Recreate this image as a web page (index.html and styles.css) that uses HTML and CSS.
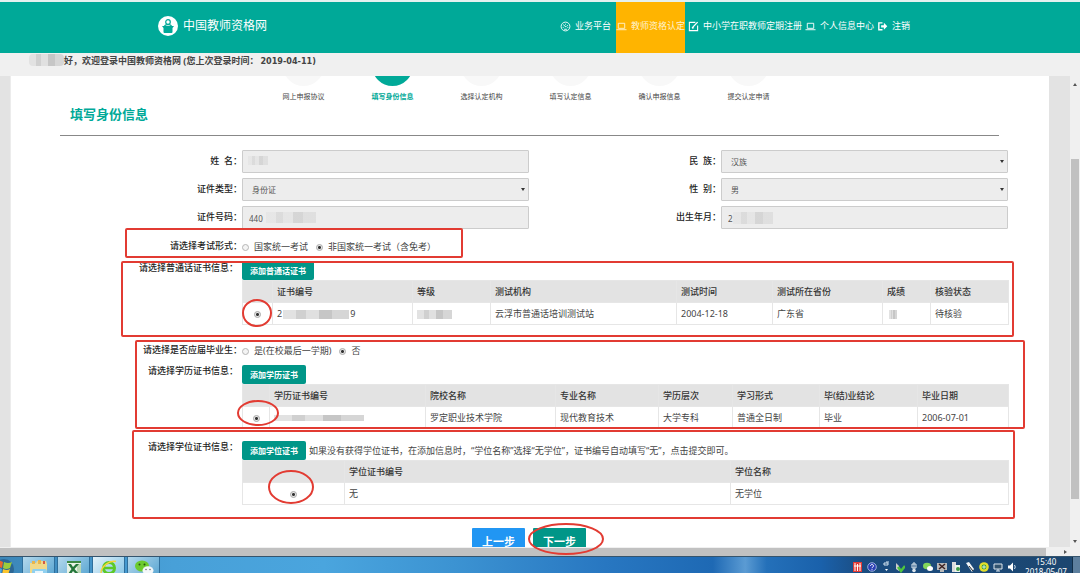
FILE: index.html
```html
<!DOCTYPE html>
<html lang="zh-CN">
<head>
<meta charset="utf-8">
<title>中国教师资格网</title>
<link rel="stylesheet" href="styles.css">
</head>
<body>
<header class="topbar">
  <div class="brand">
    <svg class="brand-logo" viewBox="0 0 20 20"><circle cx="10" cy="10" r="10" fill="#fff"/><circle cx="10" cy="6" r="2.3" fill="none" stroke="#00a998" stroke-width="1.2"/><path d="M6.500 10.500c.5-2.500 6.500-2.500 7 0" fill="none" stroke="#00a998" stroke-width="1.200"/><path d="M4 10h12l-1.500 2v4q0 1-1 1h-7q-1 0-1-1v-4z" fill="#00a998"/></svg>
    <span>中国教师资格网</span>
  </div>
  <nav class="nav">
    <a href="#"><svg viewBox="0 0 12 12"><circle cx="6" cy="6" r="4.800"/><path d="M3.500 4l3 2.500M6 3v1M8.500 4.500L7 6M3 7h1M8 7h1M4.500 9h3"/></svg>业务平台</a>
    <a href="#" class="active"><svg viewBox="0 0 12 12"><path d="M2.500 2.500h7v5.500h-7zM.5 9.500h11"/></svg>教师资格认定</a>
    <a href="#"><svg viewBox="0 0 12 12"><path d="M8 1.500H1.500v9h9V5" stroke-width="1.200"/><path d="M4.500 7.500L10.500 1.200M4.300 7.800l2-.6" stroke-width="1.500"/></svg>中小学在职教师定期注册</a>
    <a href="#"><svg viewBox="0 0 12 12"><path d="M2.500 2.500h7v5.500h-7zM.5 9.500h11"/></svg>个人信息中心</a>
    <a href="#"><svg viewBox="0 0 12 12"><path d="M6 2H2v7.500h4" stroke-width="1.500"/><path d="M4.500 4.500h3V2L11.200 5.800 7.500 9.500V7h-3z" fill="#fff" stroke="none"/></svg>注销</a>
  </nav>
</header>
<div class="greeting"><span class="mosaic mosaic-user"></span><span>好，欢迎登录中国教师资格网 (您上次登录时间：<span class="date">2019-04-11)</span></span></div>

<div class="workspace">
  <main class="page">
    <ol class="steps">
      <li>网上申报协议</li>
      <li class="current">填写身份信息</li>
      <li>选择认定机构</li>
      <li>填写认定信息</li>
      <li>确认申报信息</li>
      <li>提交认定申请</li>
    </ol>
    <h1 class="title">填写身份信息</h1>
    <form class="form">
      <div class="fields">
        <label for="name">姓&nbsp; 名：</label>
        <div class="field"><input id="name" type="text" readonly><span class="mosaic mosaic-name"></span></div>
        <label for="nation">民&nbsp; 族：</label>
        <div class="field drop"><select id="nation"><option>汉族</option></select></div>
        <label for="idtype">证件类型：</label>
        <div class="field drop"><select id="idtype"><option>身份证</option></select></div>
        <label for="sex">性&nbsp; 别：</label>
        <div class="field drop"><select id="sex"><option>男</option></select></div>
        <label for="idno">证件号码：</label>
        <div class="field"><input id="idno" type="text" value="440" readonly><span class="mosaic mosaic-id"></span></div>
        <label for="birth">出生年月：</label>
        <div class="field"><input id="birth" type="text" value="2" readonly><span class="mosaic mosaic-birth"></span></div>
      </div>

      <div class="row exam">
        <span class="row-label">请选择考试形式：</span>
        <div class="choices">
          <label><input type="radio" name="exam">国家统一考试</label>
          <label><input type="radio" name="exam" checked>非国家统一考试（含免考）</label>
        </div>
      </div>

      <div class="row cert mandarin">
        <span class="row-label">请选择普通话证书信息：</span>
        <div class="cert-body">
          <div class="cert-bar"><button type="button" class="add">添加普通话证书</button></div>
          <table>
            <colgroup><col class="w30"><col class="w140"><col class="w78"><col class="w186"><col class="w96"><col class="w110"><col class="w48"><col class="w78"></colgroup>
            <thead><tr><th></th><th>证书编号</th><th>等级</th><th>测试机构</th><th>测试时间</th><th>测试所在省份</th><th>成绩</th><th>核验状态</th></tr></thead>
            <tbody><tr><td class="pick"><input type="radio" name="m" aria-label="普通话证书" checked></td><td><span class="masked">2<span class="mosaic mosaic-no"></span>9</span></td><td><span class="mosaic mosaic-level"></span></td><td>云浮市普通话培训测试站</td><td>2004-12-18</td><td>广东省</td><td><span class="mosaic mosaic-score"></span></td><td>待核验</td></tr></tbody>
          </table>
        </div>
      </div>

      <div class="row grad">
        <span class="row-label">请选择是否应届毕业生：</span>
        <div class="choices">
          <label><input type="radio" name="grad">是(在校最后一学期)</label>
          <label><input type="radio" name="grad" checked>否</label>
        </div>
      </div>

      <div class="row cert edu">
        <span class="row-label">请选择学历证书信息：</span>
        <div class="cert-body">
          <div class="cert-bar"><button type="button" class="add">添加学历证书</button></div>
          <table>
            <colgroup><col class="w27"><col class="w156"><col class="w130"><col class="w103"><col class="w74"><col class="w87"><col class="w98"><col class="w91"></colgroup>
            <thead><tr><th></th><th>学历证书编号</th><th>院校名称</th><th>专业名称</th><th>学历层次</th><th>学习形式</th><th>毕(结)业结论</th><th>毕业日期</th></tr></thead>
            <tbody><tr><td class="pick"><input type="radio" name="e" aria-label="学历证书" checked></td><td><span class="mosaic mosaic-edu"></span></td><td>罗定职业技术学院</td><td>现代教育技术</td><td>大学专科</td><td>普通全日制</td><td>毕业</td><td>2006-07-01</td></tr></tbody>
          </table>
        </div>
      </div>

      <div class="row cert degree">
        <span class="row-label">请选择学位证书信息：</span>
        <div class="cert-body">
          <div class="cert-bar"><button type="button" class="add">添加学位证书</button><span>如果没有获得学位证书，在添加信息时，“学位名称”选择“无学位”，证书编号自动填写“无”，点击提交即可。</span></div>
          <table>
            <colgroup><col class="w102"><col class="w386"><col class="w278"></colgroup>
            <thead><tr><th></th><th>学位证书编号</th><th>学位名称</th></tr></thead>
            <tbody><tr><td class="pick"><input type="radio" name="d" aria-label="学位证书" checked></td><td>无</td><td>无学位</td></tr></tbody>
          </table>
        </div>
      </div>

      <div class="actions"><button type="button" class="prev">上一步</button><button type="button" class="next">下一步</button></div>
    </form>
  </main>
  <div class="vscroll"><i class="arrow up"></i><span class="vthumb"></span><i class="arrow down"></i></div>
</div>
<div class="hscroll"><span class="hthumb"></span><i class="arrow right"></i></div>

<footer class="taskbar">
  <div class="apps">
    <svg class="start" viewBox="0 0 20 17"><circle cx="4" cy="12" r="10" fill="#2c6795"/><path d="M-6 5q4-3 9 0l-1 6q-5-2-9 0z" fill="#e9682c"/><path d="M4 5q4 2 8 0l-2 6q-4 2-7 0z" fill="#9ccc3c"/><path d="M-6 12q4-2 8 0l-1 6h-8z" fill="#49a7e8"/><path d="M3 12q4 2 7 0l-2 6H2z" fill="#fbc52e"/></svg>
    <span class="app"><svg viewBox="0 0 20 15"><path d="M1 3h6l1-2h9l1 3v11H1z" fill="#f1d98a"/><path d="M3 1h3v3H3zM9 0h3v4H9z" fill="#e8b54c"/><path d="M14 1h2v3h-2z" fill="#d55a47"/><path d="M4 9h12q2 0 2 3v3H3v-3q0-3 1-3z" fill="#8fd0f0"/><path d="M6 11h8v4H6z" fill="#e8f6fd"/></svg></span>
    <span class="app"><svg viewBox="0 0 20 15"><path d="M3 1h14v14H3z" fill="#e9f3e6"/><path d="M3 1h14v2H3z" fill="#3d8a45"/><path d="M13 4h4v11h-4z" fill="#b9d8b4"/><path d="M4 4l3 0 2 3 3-3h3l-4.500 5 4.500 5h-3l-3-3-2 3H4l3.500-5z" fill="#24763a"/></svg></span>
    <span class="app lit"><svg viewBox="0 0 20 15"><circle cx="10" cy="8" r="5.500" fill="none" stroke="#5cc928" stroke-width="3"/><path d="M6 8h9" stroke="#5cc928" stroke-width="2.500"/><path d="M2 13C2 7 10 0 17 1.500" fill="none" stroke="#f4d53a" stroke-width="1.500"/></svg></span>
    <span class="app"><svg viewBox="0 0 20 15"><ellipse cx="8" cy="6" rx="7" ry="5.500" fill="#6ccb2f"/><circle cx="5.500" cy="4.500" r="1" fill="#28540f"/><circle cx="10.500" cy="4.500" r="1" fill="#28540f"/><ellipse cx="14" cy="10.500" rx="5.500" ry="4.300" fill="#f4f8fa"/><circle cx="12" cy="9.500" r=".8" fill="#777"/><circle cx="16" cy="9.500" r=".8" fill="#777"/></svg></span>
  </div>
  <div class="tray">
    <svg viewBox="0 0 10 12"><path d="M0 1h9v10H0z" fill="#e23a35"/><path d="M2 2v8M4.500 3v7M7 2v8M1 5h7" stroke="#fff" fill="none"/></svg>
    <svg viewBox="0 0 10 12"><circle cx="5" cy="6" r="4.300" fill="#2b3fb4" stroke="#b8c8ee" stroke-width=".8"/><path d="M3.500 5c0-2 3-2 3 0 0 1-1.500 1-1.500 2.200M5 8.200v1" fill="none" stroke="#fff"/></svg>
    <svg viewBox="0 0 10 12"><path d="M3 2h4v2H3zM5 1h3" fill="none" stroke="#d5e4f0"/><path d="M4 8h3l-1.500 2z" fill="#fff"/></svg>
    <svg viewBox="0 0 10 12"><path d="M1 2l3 3v5L1 8z" fill="#ccc"/><path d="M3 6l3 4 4-5" stroke="#4fc53d" stroke-width="2.500" fill="none"/></svg>
    <svg viewBox="0 0 10 12"><path d="M5 1v8M3 3h4v4H3z" stroke="#dbe5ec" fill="none"/><circle cx="5" cy="9.500" r="1.800" fill="#dbe5ec"/></svg>
    <svg viewBox="0 0 10 12"><ellipse cx="4" cy="5" rx="4" ry="3.300" fill="#83d65a"/><ellipse cx="7" cy="7.500" rx="3" ry="2.500" fill="#fff"/></svg>
    <svg viewBox="0 0 10 12"><path d="M0 2h10v7H0zM3 9h4v2H3z" fill="#b9b9b9"/><path d="M2 3l6 5M8 3L2 8" stroke="#3b2020" stroke-width="1.500"/></svg>
    <svg viewBox="0 0 10 12"><path d="M1 1h4v10H1z" fill="#ddd"/><path d="M4 4h5v7H4z" fill="#eef5ee"/><circle cx="7" cy="8" r="2" fill="#3b9c44"/></svg>
    <svg viewBox="0 0 10 12"><path d="M1 2l3-1 5 7-2 3-4-6z" fill="#f3f6f8"/><path d="M4 5l4 5" stroke="#222"/></svg>
    <svg viewBox="0 0 10 12"><circle cx="5" cy="6" r="4.800" fill="#e4df2b"/><circle cx="5" cy="6" r="2.400" fill="#2f9c3a"/><path d="M3 6h4M5 4v4" stroke="#fff" stroke-width=".8"/></svg>
    <svg viewBox="0 0 10 12"><path d="M1 3h8v5H1zM3 10h4M5 8v2" fill="#32536f" stroke="#dce6ee"/></svg>
    <svg viewBox="0 0 10 12"><path d="M1 4.500h2l3-3v9l-3-3H1z" fill="#fff"/><path d="M7.500 4q1.500 2 0 4" fill="none" stroke="#cfe0ee"/></svg>
  </div>
  <div class="clock"><span>15:40</span><span>2018-05-07</span></div>
  <span class="show-desktop"></span>
</footer>

<svg class="marks" width="1080" height="573" viewBox="0 0 1080 573">
  <rect x="126" y="229" width="336" height="28" rx="1"/>
  <rect x="122" y="262" width="891" height="74" rx="1"/>
  <rect x="136" y="341" width="888" height="87" rx="1"/>
  <rect x="133" y="431" width="881" height="87" rx="1"/>
  <ellipse cx="257" cy="313" rx="14" ry="13"/>
  <ellipse cx="258" cy="413" rx="20" ry="12"/>
  <ellipse cx="291" cy="487" rx="22" ry="16"/>
  <ellipse cx="566" cy="539" rx="37" ry="15"/>
</svg>
</body>
</html>
```

FILE: styles.css
```css
* { box-sizing: border-box; }
body {
  margin: 0;
  height: 100vh;
  overflow: hidden;
  position: relative;
  display: flex;
  flex-direction: column;
  font: 9px/14px "Noto Sans", "Noto Sans CJK SC", sans-serif;
  color: #444;
  background: #f1f1f1;
}
button, input, select { font: inherit; margin: 0; }

.topbar {
  flex: none;
  height: 53px;
  border-top: 2px solid #e4f1ef;
  background: #00a998;
  color: #fff;
  display: flex;
  justify-content: space-between;
  padding: 0 170px 3px 158px;
}
.brand { display: flex; align-items: center; gap: 5px; font-size: 12px; }
.brand-logo { width: 20px; height: 20px; }
.nav { display: flex; margin-bottom: -3px; }
.nav a {
  display: flex;
  align-items: center;
  gap: 4px;
  padding: 0 0 3px 3px;
  color: #fff;
  text-decoration: none;
}
.nav a.active { background: #ffb400; padding-left: 0; margin-left: 5px; color: #fff3cf; }
.nav svg { width: 11px; height: 11px; fill: none; stroke: currentColor; }

.greeting {
  flex: none;
  height: 23px;
  padding: 1px 0 0 29px;
  display: flex;
  align-items: flex-start;
  font-weight: bold;
  background: #f0f0f0;
}
.date { font-family: "DejaVu Sans Condensed", "DejaVu Sans", sans-serif; margin-left: 2px; }
.mosaic {
  display: inline-block;
  height: 9px;
  vertical-align: middle;
  background: linear-gradient(90deg, #e2e2e2 0 20%, #d0d0d0 20% 35%, #e0e0e0 35% 55%, #c6c6c6 55% 75%, #d6d6d6 75%);
}
.mosaic-user { width: 35px; height: 12px; border-radius: 4px; }
.mosaic-no { width: 66px; margin: 0 1px; }
.mosaic-level { width: 35px; }
.mosaic-score { width: 8px; margin-left: 2px; }
.mosaic-edu { width: 90px; height: 6px; }

.workspace { flex: 1; min-height: 0; display: flex; background: #e3e3e3; overflow: hidden; }
.page { flex: 1; margin: 0 21px 0 10px; background: #fff; border-left: 1px solid #ececec; overflow: hidden; }
.steps {
  list-style: none;
  margin: -31px 0 0;
  padding: 0 8px 0 0;
  display: flex;
  justify-content: center;
  font-size: 7px;
  line-height: 12px;
}
.steps li { width: 89px; text-align: center; }
.steps li::before {
  content: "";
  display: block;
  width: 41px;
  height: 41px;
  margin: 0 auto 5px;
  border-radius: 50%;
  background: #f8f8f8;
}
.steps .current { color: #00a998; font-weight: bold; }
.steps .current::before { background: #00a998; }
.title {
  margin: 2px 50px 0 49px;
  padding: 0 0 12px 10px;
  border-bottom: 1px solid #888;
  font-size: 13px;
  line-height: 18px;
  color: #00a998;
}
.form { padding: 14px 41px 0 49px; }
.fields {
  display: grid;
  grid-template-columns: 182px 1fr 192px 1fr;
  row-gap: 5px;
  align-items: center;
}
.fields > label, .row-label { text-align: right; font-weight: 500; color: #222; }
.fields > label { padding-bottom: 2px; }
.field { position: relative; }
.field input, .field select {
  display: block;
  width: 100%;
  height: 23px;
  padding: 1px 6px 0;
  border: 1px solid #ccc;
  border-radius: 1px;
  background: #ededed;
  color: #555;
  font-size: 8px;
  appearance: none;
}
.field select { padding-left: 9px; }
.drop::after {
  content: "";
  position: absolute;
  right: 4px;
  top: 10px;
  border: 2px solid transparent;
  border-top: 3px solid #333;
  border-bottom: 0;
}
.field .mosaic { position: absolute; top: 6px; opacity: .6; }
.mosaic-name { left: 6px; width: 20px; }
.field .mosaic-id { left: 24px; width: 50px; height: 11px; }
.field .mosaic-birth { left: 12px; width: 40px; height: 12px; }

.row { display: grid; grid-template-columns: 182px 1fr; }
.exam { padding-top: 10px; }
.choices { display: flex; gap: 8px; padding-top: 1px; }
.choices label { display: flex; align-items: center; gap: 5px; }
input[type="radio"] {
  appearance: none;
  width: 7px;
  height: 7px;
  border: 1px solid #b5b5b5;
  border-radius: 50%;
  background: #f4f4f4;
}
input[type="radio"]:checked { background: radial-gradient(circle, #333 0 1px, #e6e6e6 2px); border-color: #aaa; }
.cert .row-label { padding-right: 4px; }
.mandarin { padding-top: 7px; }
.grad { padding-top: 18px; }
.edu { padding-top: 7px; }
.edu .row-label, .degree .row-label { margin-top: -1px; }
.degree { padding-top: 12px; }
.cert-bar { display: flex; align-items: center; gap: 3px; }
.add {
  height: 19px;
  padding: 0 8px;
  border: 0;
  border-radius: 2px;
  background: #009688;
  color: #fff;
  font-size: 8px;
  font-weight: bold;
}
table { width: 100%; table-layout: fixed; border-collapse: collapse; }
th, td { height: 22px; padding: 0 0 0 4px; text-align: left; border: 1px solid #e6e6e6; white-space: nowrap; }
th { background: #e3e3e3; color: #333; font-weight: 500; }
.pick { padding: 0; text-align: center; }
.pick input { display: inline-block; vertical-align: middle; }
.w27 { width: 27px; } .w30 { width: 30px; } .w48 { width: 48px; } .w74 { width: 74px; }
.w78 { width: 78px; } .w87 { width: 87px; } .w91 { width: 91px; } .w96 { width: 96px; }
.w98 { width: 98px; } .w102 { width: 102px; } .w103 { width: 103px; } .w110 { width: 110px; }
.w130 { width: 130px; } .w140 { width: 140px; } .w156 { width: 156px; } .w186 { width: 186px; }
.w278 { width: 278px; } .w386 { width: 386px; }

.actions { display: flex; justify-content: center; gap: 8px; padding: 23px 10px 0 0; }
.actions button {
  width: 53px;
  height: 28px;
  padding: 0;
  border: 0;
  border-radius: 1px;
  color: #fff;
  font-size: 11px;
  font-weight: bold;
}
.prev { background: #2196f3; }
.next { background: #009688; }

.vscroll {
  width: 10px;
  background: #f0f0f0;
  display: flex;
  flex-direction: column;
  align-items: center;
  padding: 7px 0 4px;
}
.vthumb { width: 8px; height: 74%; margin: 73px 0 auto; background: #c1c1c1; }
.arrow { border: 2px solid transparent; }
.up { border-bottom: 3px solid #555; border-top: 0; }
.down { border-top: 3px solid #555; border-bottom: 0; }
.right { border-left: 3px solid #555; border-right: 0; }
.hscroll {
  flex: none;
  height: 9px;
  padding-right: 13px;
  background: #f0f0f0;
  display: flex;
  align-items: center;
  justify-content: space-between;
}
.hthumb { width: 98%; height: 8px; background: #c1c1c1; }

.taskbar {
  flex: none;
  height: 17px;
  overflow: hidden;
  display: flex;
  border-top: 1px solid #35546d;
  background: linear-gradient(90deg, #3c86b8 0, #48a0d8 16%, #4aa5de 30%, #3c93d2 42%, #2877c1 56%, #1e69b4 66%, #5b9bd3 69%, #2470b9 71%, #1a61ab 76%, #1b4c80 80%, #1c466f 100%);
  color: #fff;
}
.apps { display: flex; flex: 1; }
.start { width: 20px; height: 17px; }
.app {
  width: 33px;
  margin-left: 2px;
  padding: 3px 0 0 6px;
  border: 1px solid #2f6f9c;
  border-width: 0 1px;
  background: linear-gradient(135deg, #b4d8ec, #5fa9d4);
}
.app.lit { background: linear-gradient(135deg, #e1f1f9, #8cc8e8); }
.app svg { width: 20px; height: 15px; display: block; }
.tray { display: flex; gap: 4px; padding: 4px 6px 0 0; }
.tray svg { width: 10px; height: 12px; }
.clock {
  display: flex;
  flex-direction: column;
  align-items: center;
  width: 46px;
  font-size: 8px;
  line-height: 10px;
}
.show-desktop { width: 8px; margin-left: 3px; border-left: 1px solid #122f49; background: #5d7f9e; }

.marks { position: absolute; left: 0; top: 0; pointer-events: none; fill: none; stroke: #e23b32; stroke-width: 2; }
```
